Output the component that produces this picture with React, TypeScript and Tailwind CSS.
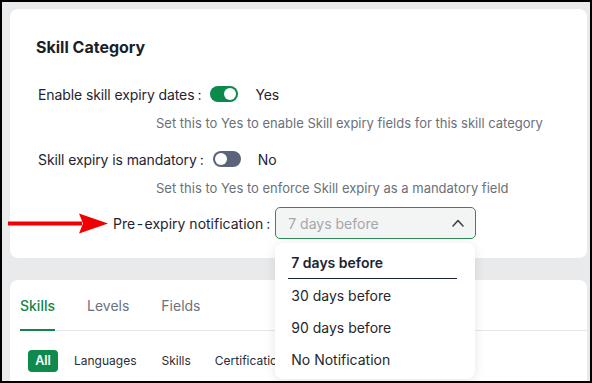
import React from "react";

function Toggle({ on }: { on: boolean }) {
  return (
    <span
      className={
        on
          ? "flex h-[16px] w-[28px] items-center justify-end rounded-full bg-[#0c8a4b] px-[2px]"
          : "flex h-[16px] w-[28px] items-center justify-start rounded-full bg-[#5b6579] px-[2px]"
      }
    >
      <span className="h-[12px] w-[12px] rounded-full bg-white" />
    </span>
  );
}

function Row({ label, on, value }: { label: string; on: boolean; value: string }) {
  return (
    <div className="flex h-5 items-center pl-[28px] text-[14px] tracking-[-0.1px] text-[#1f2430]">
      <span>{label}</span>
      <span className="ml-[3px]">:</span>
      <span className="ml-[9px]">
        <Toggle on={on} />
      </span>
      <span className="ml-[17px]">{value}</span>
    </div>
  );
}

export default function App() {
  const options = ["7 days before", "30 days before", "90 days before", "No Notification"];
  return (
    <div className="relative h-[383px] w-[592px] overflow-hidden border-2 border-black bg-[#e9eaec] font-['Inter',sans-serif]">
      <div className="ml-[8px] mt-[7px] flex w-[577px] flex-col gap-[22px]">
        {/* settings card */}
        <div className="rounded-lg bg-white pt-[28px] pb-[19px]">
          <h2 className="pl-[26px] text-[16px] font-bold leading-5 text-[#1b1f27]">Skill Category</h2>
          <div className="mt-[27px]">
            <Row label="Enable skill expiry dates" on={true} value="Yes" />
          </div>
          <p className="mt-[10px] pl-[146px] text-[13px] leading-[18px] text-[#6b7079]">
            Set this to Yes to enable Skill expiry fields for this skill category
          </p>
          <div className="mt-[17px]">
            <Row label="Skill expiry is mandatory" on={false} value="No" />
          </div>
          <p className="mt-[10px] pl-[146px] text-[13px] leading-[18px] text-[#6b7079]">
            Set this to Yes to enforce Skill expiry as a mandatory field
          </p>
          <div className="mt-[10px] flex items-center pl-[103px] text-[14px] text-[#1f2430]">
            <span>
              Pre<span className="mx-[1.5px]">-</span>expiry notification
            </span>
            <span className="ml-[3px]">:</span>
            <div className="relative ml-[5px]">
              <div className="flex h-[32px] w-[201px] items-center justify-between rounded-[5px] border-[1.5px] border-[#2f8a57] bg-[#f3f4f4] pl-[12px] pr-[11px]">
                <span className="text-[14px] text-[#a3a7ad]">7 days before</span>
                <svg width="12" height="8" viewBox="0 0 12 8" fill="none">
                  <path d="M1 7L6 1.5L11 7" stroke="#3b3f46" strokeWidth="1.5" strokeLinecap="round" strokeLinejoin="round" />
                </svg>
              </div>
              <div className="absolute left-0 top-[36px] z-10 w-[200px] rounded-lg bg-white py-1 shadow-[0_2px_12px_rgba(0,0,0,0.10)]">
                {options.map((o, i) => (
                  <div
                    key={o}
                    className={
                      i === 0
                        ? "ml-[13px] mr-[18px] flex h-8 items-center border-b-[1.5px] border-[#1b2433] px-[3px] text-[14px] font-semibold text-[#1b2433]"
                        : "ml-[13px] mr-[18px] flex h-8 items-center px-[3px] text-[14px] text-[#24272d]"
                    }
                  >
                    {o}
                  </div>
                ))}
              </div>
            </div>
          </div>
        </div>

        {/* tabs card */}
        <div className="h-[120px] rounded-t-lg bg-white">
          <div className="ml-[10px] flex gap-[32px] border-b border-[#e6e7ea] pt-[15px] text-[14px]">
            <span className="-mb-px border-b-[2.5px] border-[#15844b] pb-[12px] font-medium text-[#15844b]">Skills</span>
            <span className="pb-[14px] text-[#6b7280]">Levels</span>
            <span className="pb-[14px] text-[#6b7280]">Fields</span>
          </div>
          <div className="ml-[18px] mt-[19px] flex items-center text-[12px] text-[#2a2d33]">
            <span className="flex h-[22px] w-[30px] items-center justify-center rounded-[4px] bg-[#0e8a4c] text-[12.5px] font-semibold text-white">All</span>
            <span className="ml-[16px]">Languages</span>
            <span className="ml-[25px]">Skills</span>
            <span className="ml-[24px]">Certifications</span>
          </div>
        </div>
      </div>

      {/* annotation arrow */}
      <svg className="absolute left-[6px] top-[210px]" width="102" height="23" viewBox="0 0 102 23">
        <rect x="0" y="9.5" width="74" height="4" fill="#f00000" />
        <polygon points="71,1.5 100,11.5 71,21.5 75,11.5" fill="#f00000" />
      </svg>
    </div>
  );
}
